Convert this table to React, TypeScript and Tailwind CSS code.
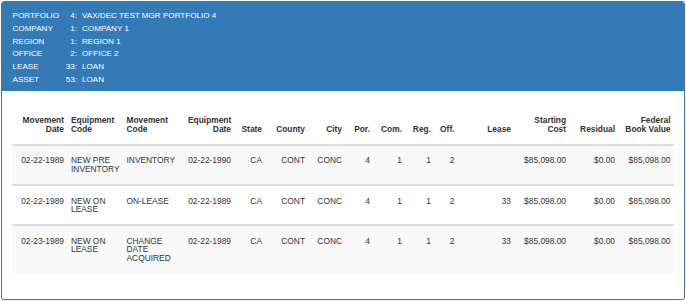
const info = [
  { label: "PORTFOLIO", num: "4", name: "VAX/DEC TEST MGR PORTFOLIO 4" },
  { label: "COMPANY", num: "1", name: "COMPANY 1" },
  { label: "REGION", num: "1", name: "REGION 1" },
  { label: "OFFICE", num: "2", name: "OFFICE 2" },
  { label: "LEASE", num: "33", name: "LOAN" },
  { label: "ASSET", num: "53", name: "LOAN" },
];

const widths = [55.5, 55.5, 61.5, 50, 31, 43, 37, 28, 32, 29, 23.5, 56.5, 55, 49, 55.5];

const headers: { text: string; left?: boolean }[] = [
  { text: "Movement Date" },
  { text: "Equipment Code", left: true },
  { text: "Movement Code", left: true },
  { text: "Equipment Date" },
  { text: "State" },
  { text: "County" },
  { text: "City" },
  { text: "Por." },
  { text: "Com." },
  { text: "Reg." },
  { text: "Off." },
  { text: "Lease" },
  { text: "Starting Cost" },
  { text: "Residual" },
  { text: "Federal Book Value" },
];

const rows = [
  ["02-22-1989", "NEW PRE INVENTORY", "INVENTORY", "02-22-1990", "CA", "CONT", "CONC", "4", "1", "1", "2", "", "$85,098.00", "$0.00", "$85,098.00"],
  ["02-22-1989", "NEW ON LEASE", "ON-LEASE", "02-22-1989", "CA", "CONT", "CONC", "4", "1", "1", "2", "33", "$85,098.00", "$0.00", "$85,098.00"],
  ["02-23-1989", "NEW ON LEASE", "CHANGE DATE ACQUIRED", "02-22-1989", "CA", "CONT", "CONC", "4", "1", "1", "2", "33", "$85,098.00", "$0.00", "$85,098.00"],
];

export default function App() {
  return (
    <div className="w-[686px] h-[301px] bg-white pl-[1px] pt-[1px] font-['Liberation_Sans',Arial,sans-serif]">
      <div className="w-[684px] h-[299px] border border-[#337ab7] rounded-[3px] shadow-[0_1px_1px_rgba(0,0,0,0.05)] overflow-hidden">
        {/* heading */}
        <div className="h-[89px] bg-[#337ab7] text-white text-[8.1px] leading-[12.8px] px-[10.5px] pt-[8px]">
          {info.map((r) => (
            <div key={r.label} className="flex">
              <span className="w-[48px]">{r.label}</span>
              <span className="w-[16.5px] text-right">{r.num}:</span>
              <span className="ml-[5px]">{r.name}</span>
            </div>
          ))}
        </div>

        {/* body */}
        <div className="px-[10px] pt-[10.5px]">
          <table className="w-[662px] table-fixed border-collapse text-[8.4px] leading-[8.6px] text-[#333]">
            <colgroup>
              {widths.map((w, i) => (
                <col key={i} style={{ width: w }} />
              ))}
            </colgroup>
            <thead>
              <tr className="border-b-2 border-[#ddd]">
                {headers.map((h) => (
                  <th
                    key={h.text}
                    className={`font-bold align-bottom px-[3.5px] pt-[14.8px] pb-[10.5px] ${
                      h.left ? "text-left" : "text-right"
                    }`}
                  >
                    {h.text}
                  </th>
                ))}
              </tr>
            </thead>
            <tbody>
              {rows.map((r, ri) => (
                <tr
                  key={ri}
                  className={`${ri > 0 ? "border-t-2 border-[#ddd]" : ""} ${
                    ri % 2 === 0 ? "bg-[#f9f9f9]" : "bg-white"
                  }`}
                >
                  {r.map((c, ci) => (
                    <td
                      key={ci}
                      className={`align-top px-[3.5px] py-[10.5px] ${
                        headers[ci].left ? "text-left" : "text-right"
                      }`}
                    >
                      {c}
                    </td>
                  ))}
                </tr>
              ))}
            </tbody>
          </table>
        </div>
      </div>
    </div>
  );
}
